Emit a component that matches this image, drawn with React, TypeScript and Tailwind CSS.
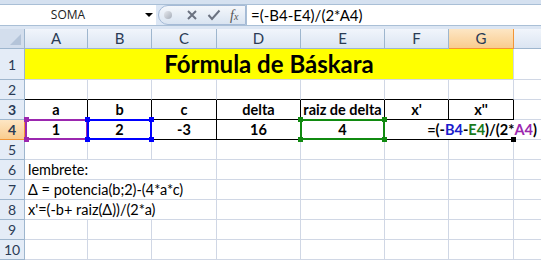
import type { ReactNode } from 'react';
import clsx from 'clsx';

const COLS = [
  { key: 'A', w: 'w-[63px]' },
  { key: 'B', w: 'w-[64px]' },
  { key: 'C', w: 'w-[65px]' },
  { key: 'D', w: 'w-[84px]' },
  { key: 'E', w: 'w-[84px]' },
  { key: 'F', w: 'w-[64px]' },
  { key: 'G', w: 'w-[65px]' },
];

function Cell({ w, className, children }: { w: string; className?: string; children?: ReactNode }) {
  return (
    <div
      className={clsx(
        'flex h-full shrink-0 items-center justify-center whitespace-nowrap border-b border-r border-[#d0d7e5]',
        w,
        className,
      )}
    >
      {children}
    </div>
  );
}

function RowHead({ n, active }: { n: number; active?: boolean }) {
  return (
    <div
      className={clsx(
        'flex h-full w-[25px] shrink-0 items-center justify-center border-b border-r font-["Lato"] text-[14px] text-[#2a3b55]',
        active
          ? 'border-[#f29536] bg-gradient-to-b from-[#fde6c4] to-[#f9cc8e]'
          : 'border-[#9eb6ce] bg-[#e4ecf7]',
      )}
    >
      {n}
    </div>
  );
}

function Handle({ className }: { className: string }) {
  return <div className={clsx('absolute h-[5px] w-[5px]', className)} />;
}

export default function App() {
  const plainRow = (n: number, first?: ReactNode) => (
    <div className="flex h-[20px]">
      <RowHead n={n} />
      {first ? (
        <Cell w="w-[192px]" className="justify-start pl-[3px] text-[14.5px]">
          {first}
        </Cell>
      ) : (
        <>
          <Cell w="w-[63px]" />
          <Cell w="w-[64px]" />
          <Cell w="w-[65px]" />
        </>
      )}
      <Cell w="w-[84px]" />
      <Cell w="w-[84px]" />
      <Cell w="w-[64px]" />
      <Cell w="w-[65px]" />
      <Cell w="w-[30px]" />
    </div>
  );

  return (
    <div className="relative h-[271px] w-[541px] overflow-hidden bg-white font-['Lato'] text-black">
      {/* formula bar */}
      <div className="h-[4px] bg-[#d5e1f0]" />
      <div className="flex h-[22px] border-y border-[#a9bfd6] bg-[#dce7f5]">
        <div className="relative flex w-[156px] items-center justify-center bg-white font-['Open_Sans'] text-[12px] text-[#222]">
          <span className="-ml-[20px]">SOMA</span>
          <div className="absolute right-[3px] top-[8px] h-0 w-0 border-x-[4px] border-t-[4px] border-x-transparent border-t-black" />
        </div>
        <div className="ml-[2px] flex w-[88px] items-center gap-[9px] rounded-l-full border border-[#a5bad6] bg-gradient-to-b from-[#f4f7fb] to-[#d9e4f1] pl-[5px]">
          <div className="h-[8px] w-[8px] rounded-full bg-gradient-to-br from-[#e6e9ee] to-[#a6adb8]" />
          <svg width="12" height="12" viewBox="0 0 12 12" className="ml-[5px]">
            <path d="M2 2 L10 10 M10 2 L2 10" stroke="#6b7280" strokeWidth="2" />
          </svg>
          <svg width="14" height="12" viewBox="0 0 14 12">
            <path d="M1.5 6 L5 10 L12.5 1.5" stroke="#6b7280" strokeWidth="2" fill="none" />
          </svg>
          <span className="font-['Liberation_Serif'] text-[14px] italic text-[#555]">
            f<span className="text-[10px]">x</span>
          </span>
        </div>
        <div className="flex flex-1 items-center border-l border-[#a9bfd6] bg-white pl-[4px] text-[15px]">
          =(-B4-E4)/(2*A4)
        </div>
      </div>
      <div className="h-[3px] bg-[#dce6f3]" />

      {/* sheet */}
      <div className="relative">
        {/* column header */}
        <div className="flex h-[20px] text-[15px] text-[#2a3b55]">
          <div className="relative w-[25px] shrink-0 border-b border-r border-[#9eb6ce] bg-[#d3deed]">
            <div className="absolute bottom-[3px] right-[3px] h-0 w-0 border-b-[11px] border-l-[11px] border-b-[#b4c4d9] border-l-transparent" />
          </div>
          {COLS.map((c) => (
            <div
              key={c.key}
              className={clsx(
                'flex shrink-0 items-center justify-center border-b border-r',
                c.w,
                c.key === 'G'
                  ? 'border-[#f29536] bg-gradient-to-b from-[#fde6c4] to-[#f9cc8e]'
                  : 'border-[#9eb6ce] bg-gradient-to-b from-[#f1f5fb] to-[#dbe5f2]',
              )}
            >
              {c.key}
            </div>
          ))}
          <div className="w-[30px] shrink-0 border-b border-[#9eb6ce] bg-gradient-to-b from-[#f1f5fb] to-[#dbe5f2]" />
        </div>

        {/* row 1 */}
        <div className="flex h-[31px]">
          <RowHead n={1} />
          <Cell w="w-[489px]" className="bg-[#ffff00] text-[24px] font-bold">
            Fórmula de Báskara
          </Cell>
          <Cell w="w-[30px]" />
        </div>

        {/* row 2 */}
        <div className="flex h-[20px]">
          <RowHead n={2} />
          {COLS.map((c) => (
            <Cell key={c.key} w={c.w} className="border-b-black" />
          ))}
          <Cell w="w-[30px]" />
        </div>

        {/* row 3 */}
        <div className="flex h-[20px] text-[14.5px] font-bold">
          <RowHead n={3} />
          {['a', 'b', 'c', 'delta', 'raiz de delta', "x'", "x''"].map((t, i) => (
            <Cell key={t} w={COLS[i].w} className="border-b-black border-r-black">
              {t}
            </Cell>
          ))}
          <Cell w="w-[30px]" />
        </div>

        {/* row 4 */}
        <div className="flex h-[20px] text-[14.5px] font-bold">
          <RowHead n={4} active />
          {['1', '2', '-3', '16', '4', '', ''].map((t, i) => (
            <Cell key={i} w={COLS[i].w} className="border-b-black border-r-black">
              {t}
            </Cell>
          ))}
          <Cell w="w-[30px]" />
        </div>

        {plainRow(5)}
        {plainRow(6, 'lembrete:')}
        {plainRow(7, 'Δ = potencia(b;2)-(4*a*c)')}
        {plainRow(8, "x'=(-b+ raiz(Δ))/(2*a)")}
        {plainRow(9)}
        {plainRow(10)}

        {/* range finder boxes */}
        <div className="absolute left-[25px] top-[90px] h-[21px] w-[63px] border-2 border-[#9b27af]" />
        <Handle className="left-[24px] top-[88px] bg-[#9b27af]" />
        <Handle className="left-[85px] top-[88px] bg-[#9b27af]" />
        <Handle className="left-[24px] top-[108px] bg-[#9b27af]" />
        <Handle className="left-[85px] top-[108px] bg-[#9b27af]" />

        <div className="absolute left-[87px] top-[90px] h-[21px] w-[65px] border-2 border-[#0000ff]" />
        <Handle className="left-[85px] top-[88px] bg-[#0000ff]" />
        <Handle className="left-[149px] top-[88px] bg-[#0000ff]" />
        <Handle className="left-[85px] top-[108px] bg-[#0000ff]" />
        <Handle className="left-[149px] top-[108px] bg-[#0000ff]" />

        <div className="absolute left-[300px] top-[90px] h-[21px] w-[85px] border-2 border-[#108a10]" />
        <Handle className="left-[298px] top-[88px] bg-[#108a10]" />
        <Handle className="left-[382px] top-[88px] bg-[#108a10]" />
        <Handle className="left-[298px] top-[108px] bg-[#108a10]" />
        <Handle className="left-[382px] top-[108px] bg-[#108a10]" />

        {/* G4 in edit mode */}
        <div className="absolute left-[430px] top-[91px] flex h-[19px] w-[104px] items-center justify-center whitespace-nowrap bg-white text-[14.5px] font-bold">
          =(-<span className="text-[#1a1acc]">B4</span>-<span className="text-[#1a7a1a]">E4</span>)
          <span className="inline-block h-[15px] w-px bg-black" />
          /(2*<span className="text-[#9b27af]">A4</span>)
        </div>
        <div className="absolute left-[511px] top-[108px] h-[5px] w-[5px] bg-black" />
      </div>
    </div>
  );
}
